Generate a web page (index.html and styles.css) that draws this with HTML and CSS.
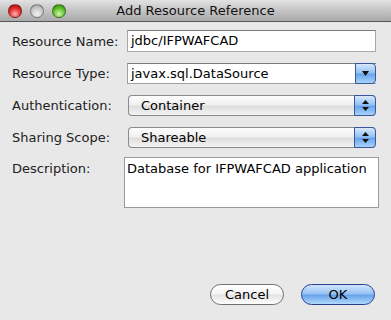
FILE: index.html
```html
<!DOCTYPE html>
<html lang="en">
<head>
  <meta charset="UTF-8">
  <title>Add Resource Reference</title>
  <link rel="stylesheet" href="styles.css">
</head>
<body>
  <div class="window">
    <div class="titlebar">
      <div class="lights">
        <span class="light red"></span>
        <span class="light gray"></span>
        <span class="light green"></span>
      </div>
      <div class="title">Add Resource Reference</div>
    </div>

    <div class="content">
      <div class="form">
        <label class="lbl">Resource Name:</label>
        <div class="field">jdbc/IFPWAFCAD</div>

        <label class="lbl">Resource Type:</label>
        <div class="combo">
          <span class="combo-text">javax.sql.DataSource</span>
          <span class="combo-btn">
            <svg width="7" height="5" viewBox="0 0 7 5"><path d="M0 0h7L3.5 5z" fill="#111"/></svg>
          </span>
        </div>

        <label class="lbl">Authentication:</label>
        <div class="popup">
          <span class="popup-text">Container</span>
          <span class="stepper">
            <svg width="7" height="11" viewBox="0 0 7 11"><path d="M0 4h7L3.5 0z M0 7h7L3.5 11z" fill="#111"/></svg>
          </span>
        </div>

        <label class="lbl">Sharing Scope:</label>
        <div class="popup">
          <span class="popup-text">Shareable</span>
          <span class="stepper">
            <svg width="7" height="11" viewBox="0 0 7 11"><path d="M0 4h7L3.5 0z M0 7h7L3.5 11z" fill="#111"/></svg>
          </span>
        </div>

        <label class="lbl lbl-top">Description:</label>
        <div class="textarea">Database for IFPWAFCAD application</div>
      </div>

      <div class="buttons">
        <button class="btn">Cancel</button>
        <button class="btn btn-ok">OK</button>
      </div>
    </div>
  </div>
</body>
</html>
```

FILE: styles.css
```css
body {
  margin: 0;
  font-family: 'DejaVu Sans', 'Liberation Sans', sans-serif;
  font-size: 13px;
  color: #000;
  background: #e8e8e8;
}
.window {
  width: 391px;
  height: 320px;
  display: flex;
  flex-direction: column;
  background: #e8e8e8;
}
.titlebar {
  height: 21px;
  display: flex;
  align-items: center;
  background: linear-gradient(#e2e2e2, #c4c4c4 50%, #a9a9a9);
  border-bottom: 1px solid #555;
  position: relative;
}
.lights {
  display: flex;
  gap: 8px;
  padding-left: 8px;
}
.light {
  width: 14px;
  height: 14px;
  border-radius: 50%;
  box-sizing: border-box;
  border: 1px solid rgba(0,0,0,0.35);
}
.red {
  background: radial-gradient(circle at 50% 75%, #ffb0b0, #e02a2a 55%, #9e0f0f);
}
.gray {
  background: radial-gradient(circle at 50% 75%, #f2f2f2, #c8c8c8 55%, #9a9a9a);
}
.green {
  background: radial-gradient(circle at 50% 75%, #d2f8a8, #5cc02a 55%, #2f7f10);
}
.title {
  position: absolute;
  left: 0;
  right: 0;
  text-align: center;
  font-size: 13px;
  color: #111;
  pointer-events: none;
}
.content {
  flex: 1;
  display: flex;
  flex-direction: column;
  padding: 8px 15px 15px 12px;
}
.form {
  display: grid;
  grid-template-columns: 115px 1fr;
  row-gap: 11px;
  align-items: center;
}
.lbl {
  color: #222;
  white-space: nowrap;
}
.lbl-top {
  align-self: start;
  padding-top: 2px;
}
.field {
  height: 22px;
  box-sizing: border-box;
  background: #fff;
  border: 1px solid #a8a8a8;
  border-top-color: #7a7a7a;
  padding: 2px 3px;
  line-height: 16px;
}
.combo {
  height: 21px;
  box-sizing: border-box;
  display: flex;
  background: #fff;
  border: 1px solid #a0a0a0;
  border-top-color: #7c7c7c;
  border-right: none;
}
.combo-text {
  flex: 1;
  padding: 1px 3px;
  line-height: 17px;
}
.combo-btn, .stepper {
  width: 19px;
  margin: -1px 0;
  display: flex;
  align-items: center;
  justify-content: center;
  border: 1px solid #3a55a0;
  border-radius: 0 4px 4px 0;
  background: linear-gradient(#d6e8fc, #95c2f4 45%, #6aa6ec 55%, #a8d2f8);
}
.popup {
  height: 21px;
  box-sizing: border-box;
  display: flex;
  border: 1px solid #8a8a8a;
  border-right: none;
  border-radius: 4px;
  background: linear-gradient(#fdfdfd, #f0f0f0 45%, #dedede 55%, #f4f4f4);
  margin-left: 1px;
}
.popup-text {
  flex: 1;
  padding-left: 12px;
  line-height: 19px;
}
.popup .stepper {
  width: 20px;
}
.textarea {
  height: 51px;
  box-sizing: border-box;
  background: #fff;
  border: 1px solid #9a9a9a;
  margin-left: -3px;
  margin-right: -3px;
  margin-top: -2px;
  padding: 3px 2px;
  line-height: 16px;
}
.buttons {
  margin-top: auto;
  display: flex;
  justify-content: flex-end;
  gap: 17px;
  padding-right: 1px;
}
.btn {
  width: 74px;
  height: 21px;
  font-family: inherit;
  font-size: 13px;
  color: #000;
  border-radius: 11px;
  border: 1px solid #707070;
  background: linear-gradient(#ffffff, #f4f4f4 45%, #e4e4e4 55%, #ffffff);
  padding: 0;
  line-height: 19px;
}
.btn-ok {
  border-color: #2a3f8f;
  background: linear-gradient(#d0e6fc, #98c4f4 45%, #68a4ea 55%, #b0dafc);
}
```
